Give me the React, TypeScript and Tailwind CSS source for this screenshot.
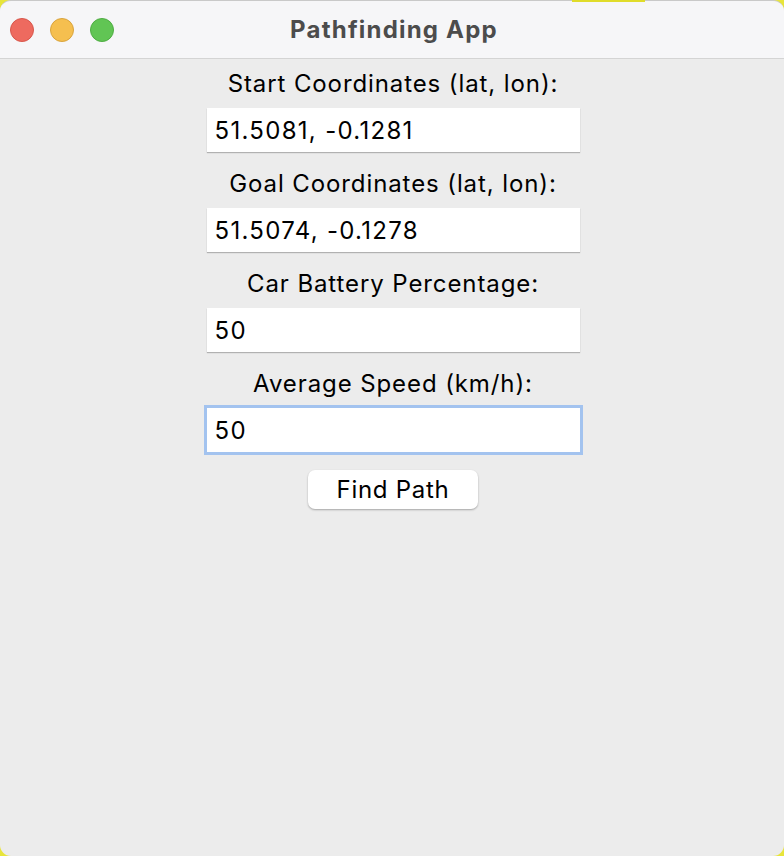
import React from "react";

const font = { fontFamily: "Inter, 'Noto Sans', sans-serif" };

function Field({ label, value, focused }: { label: string; value: string; focused?: boolean }) {
  return (
    <div className="flex flex-col items-center">
      <div className="h-[30px] leading-[30px] mt-[1px] text-[24px] tracking-[0.9px] text-black">{label}</div>
      <div className="mt-[9px] w-[373px] h-[44px] flex items-center bg-white shadow-[0_1px_1px_rgba(0,0,0,0.25)]"
        style={focused ? { boxShadow: "0 0 0 3px #a3c3ef" } : undefined}>
        <span className="pl-[8px] pt-[1px] text-[24px] tracking-[1.3px] text-black">{value}</span>
      </div>
    </div>
  );
}

export default function App() {
  return (
    <div className="w-[784px] h-[856px] bg-[#e8e53a] relative overflow-hidden" style={font}>
      <div className="absolute inset-0 rounded-[11px] bg-[#ececec] overflow-hidden border-t border-[#c9c9c9] flex flex-col">
        <div className="h-[58px] shrink-0 bg-[#f6f6f8] border-b border-[#d4d4d4] relative flex items-center justify-center">
          <div className="absolute left-[10px] top-[17px] flex gap-[16px]">
            <div className="w-[24px] h-[24px] rounded-full bg-[#ee6a5f] border border-[#d8574c]" />
            <div className="w-[24px] h-[24px] rounded-full bg-[#f5bf4f] border border-[#d9a43d]" />
            <div className="w-[24px] h-[24px] rounded-full bg-[#61c554] border border-[#4fad43]" />
          </div>
          <div className="text-[24px] font-bold tracking-[1.2px] text-[#4c4c4c] mt-[1px] pl-[4px]">Pathfinding App</div>
        </div>
        <div className="flex flex-col items-center pt-[9px] pl-[2px]">
          <div className="flex flex-col gap-[16px]">
            <Field label="Start Coordinates (lat, lon):" value="51.5081, -0.1281" />
            <Field label="Goal Coordinates (lat, lon):" value="51.5074, -0.1278" />
            <Field label="Car Battery Percentage:" value="50" />
            <Field label="Average Speed (km/h):" value="50" focused />
          </div>
          <button className="mt-[18px] w-[170px] h-[39px] rounded-[7px] bg-white text-[24px] tracking-[0.7px] text-black shadow-[0_1px_2px_rgba(0,0,0,0.3)]">
            Find Path
          </button>
        </div>
      </div>
      <div className="absolute top-0 left-[572px] w-[73px] h-[2px] bg-[#e0dc2a]" />
    </div>
  );
}
